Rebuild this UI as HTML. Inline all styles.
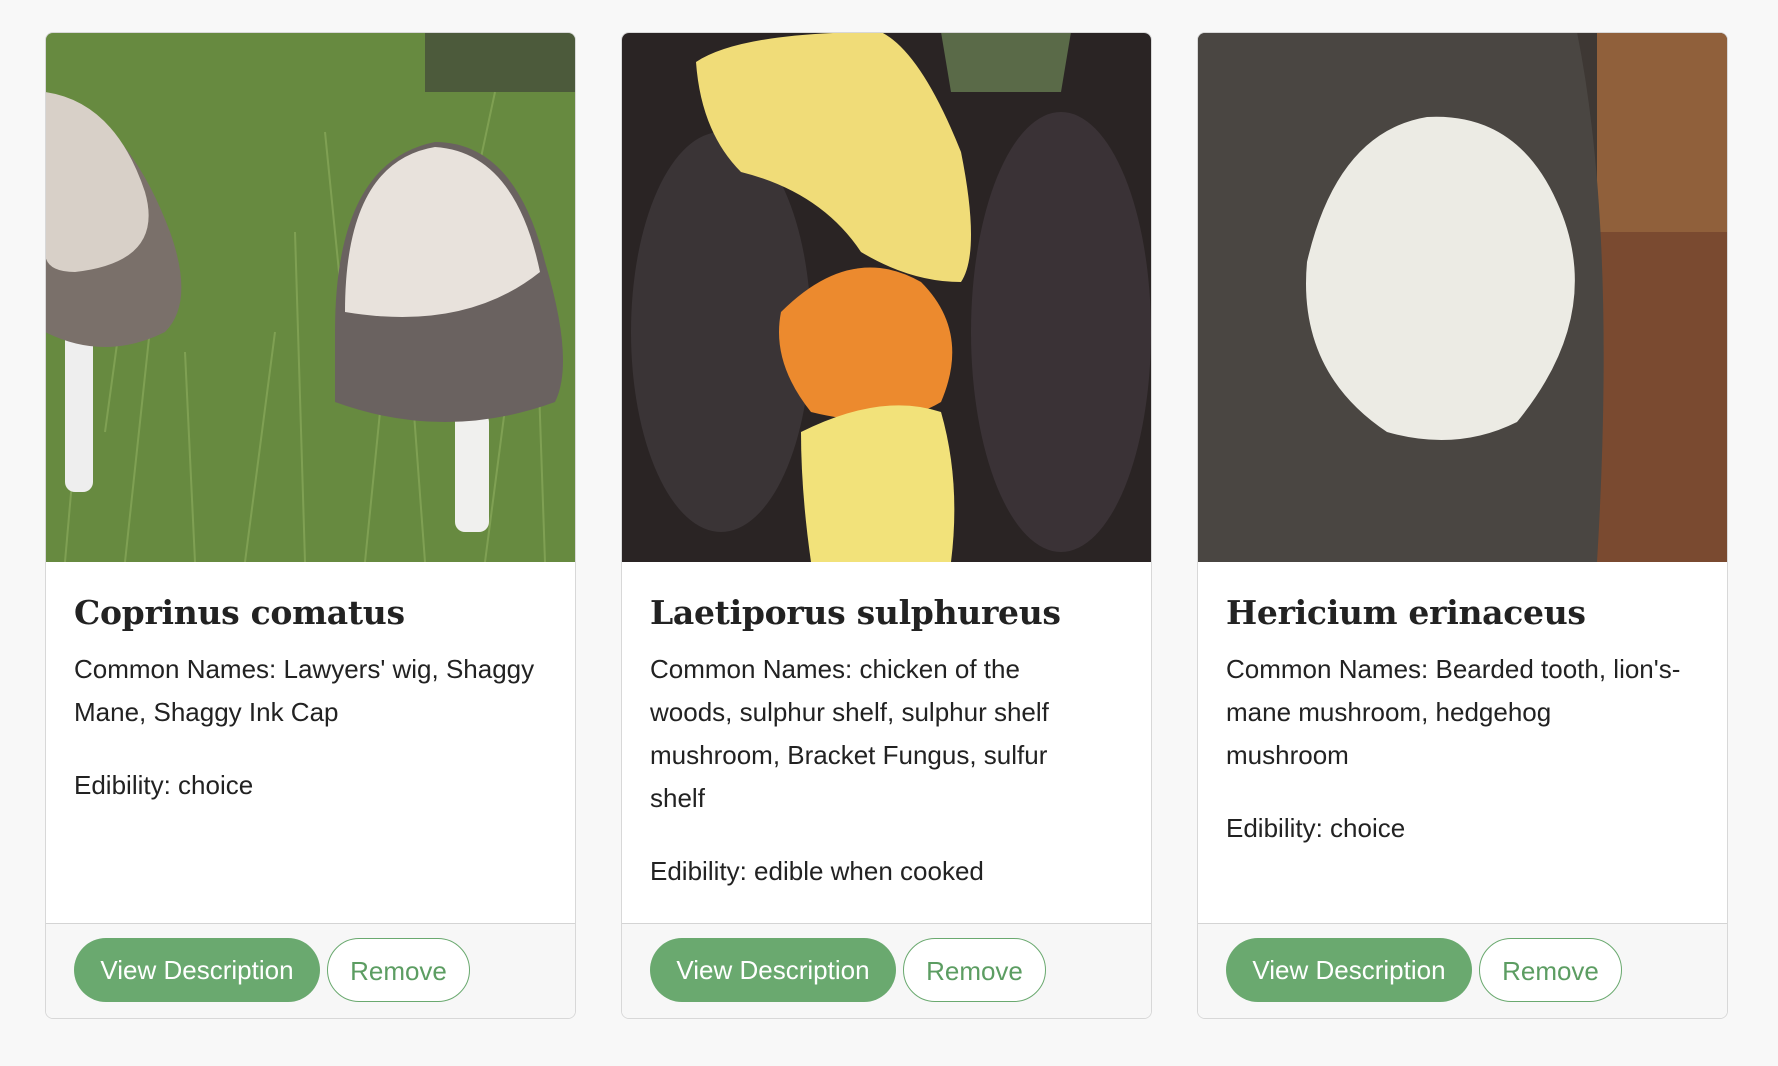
<!DOCTYPE html>
<html><head><style>
html,body{margin:0;padding:0;background:#f8f8f8;width:1778px;height:1066px;overflow:hidden}
.card{position:absolute;top:32px;width:529px;height:985px;background:#fff;border:1px solid #d8d8d8;border-radius:8px;overflow:hidden}
.img{width:531px;height:530px;display:block;margin:-1px}
.body{padding:0 28px}
h2{font-family:"DejaVu Serif","Liberation Serif",serif;font-weight:bold;font-size:33px;color:#222;margin:32px 0 16px;letter-spacing:-0.3px}
p{font-family:"Liberation Sans",sans-serif;font-size:26px;line-height:43px;color:#222;margin:0 0 30px;white-space:nowrap}
.foot{position:absolute;left:0;right:0;bottom:0;height:94px;background:#f7f7f7;border-top:1px solid #d4d4d4}
.btn{position:absolute;top:14px;height:64px;border-radius:33px;font-family:"Liberation Sans",sans-serif;font-size:26px;line-height:64px;text-align:center;box-sizing:border-box}
.v{left:28px;width:246px;background:#6aa96f;color:#fff}
.r{left:281px;width:143px;border:1px solid #6aa96f;color:#5c9d62;background:#fff}
</style></head><body>

<div class="card" style="left:45px">
<svg class="img" viewBox="0 0 531 530">
<rect width="531" height="530" fill="#5a7a3a"/>
<rect width="531" height="530" fill="#6f9444" opacity=".6"/>
<g stroke="#90b060" stroke-width="2" opacity=".6">
<path d="M20 530L40 300M80 530L110 250M150 530L140 320M200 530L230 300M260 530L250 200M320 530L340 330M380 530L360 260M440 530L470 300M500 530L490 240M60 400L90 180M300 300L280 100M420 200L450 60"/></g>
<rect x="380" y="0" width="151" height="60" fill="#3a3a38" opacity=".6"/>
<rect x="20" y="280" width="28" height="180" fill="#eee" rx="10"/>
<path d="M0 60Q80 80 125 200Q150 270 120 300Q60 330 0 300Z" fill="#7a706a"/>
<path d="M0 60Q70 70 100 160Q120 230 30 240Q0 240 0 220Z" fill="#d8d0c8"/>
<rect x="410" y="380" width="34" height="120" fill="#f0f0ee" rx="10"/>
<path d="M290 300Q290 130 390 110Q470 110 500 230Q530 330 510 370Q400 410 290 370Z" fill="#6a6260"/>
<path d="M300 280Q300 130 390 115Q470 120 495 240Q420 300 300 280Z" fill="#e8e2dc"/>
</svg>
<div class="body"><h2>Coprinus comatus</h2>
<p>Common Names: Lawyers' wig, Shaggy<br>Mane, Shaggy Ink Cap</p>
<p>Edibility: choice</p></div>
<div class="foot"><div class="btn v">View Description</div><div class="btn r">Remove</div></div>
</div>

<div class="card" style="left:621px">
<svg class="img" viewBox="0 0 531 530">
<rect width="531" height="530" fill="#2a2424"/>
<ellipse cx="100" cy="300" rx="90" ry="200" fill="#3a3436"/>
<ellipse cx="440" cy="300" rx="90" ry="220" fill="#3a3236"/>
<path d="M320 0L450 0L440 60L330 60Z" fill="#5a6a48"/>
<path d="M75 30Q120 0 260 0Q300 20 340 120Q360 220 340 250Q290 250 240 220Q200 160 120 140Q80 100 75 30Z" fill="#f0dc78"/>
<path d="M160 280Q230 210 300 250Q350 300 320 370Q270 400 190 380Q150 330 160 280Z" fill="#ec8a2e"/>
<path d="M180 400Q260 360 320 380Q340 450 330 530L190 530Q180 460 180 400Z" fill="#f2e27a"/>
</svg>
<div class="body"><h2>Laetiporus sulphureus</h2>
<p>Common Names: chicken of the<br>woods, sulphur shelf, sulphur shelf<br>mushroom, Bracket Fungus, sulfur<br>shelf</p>
<p>Edibility: edible when cooked</p></div>
<div class="foot"><div class="btn v">View Description</div><div class="btn r">Remove</div></div>
</div>

<div class="card" style="left:1197px">
<svg class="img" viewBox="0 0 531 530">
<rect width="531" height="530" fill="#3e3834"/>
<rect x="400" y="0" width="131" height="530" fill="#7a4a30"/>
<rect x="400" y="0" width="131" height="200" fill="#9a6a40" opacity=".7"/>
<path d="M0 0L380 0Q420 200 400 530L0 530Z" fill="#4a4642"/>
<path d="M110 230Q140 100 230 85Q320 80 360 170Q410 280 320 390Q260 420 190 400Q100 340 110 230Z" fill="#ecebe4"/>
</svg>
<div class="body"><h2>Hericium erinaceus</h2>
<p>Common Names: Bearded tooth, lion's-<br>mane mushroom, hedgehog<br>mushroom</p>
<p>Edibility: choice</p></div>
<div class="foot"><div class="btn v">View Description</div><div class="btn r">Remove</div></div>
</div>

</body></html>
